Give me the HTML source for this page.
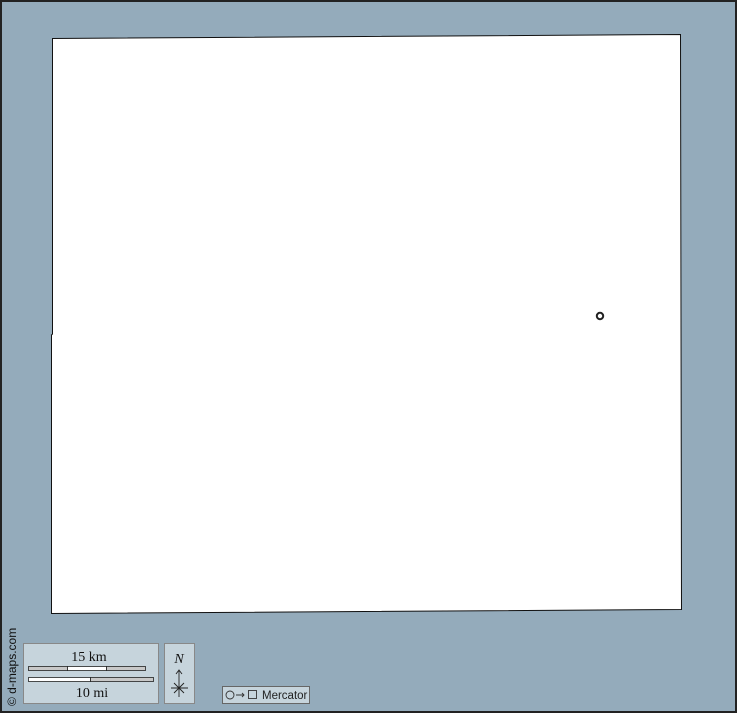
<!DOCTYPE html>
<html><head><style>
html,body{margin:0;padding:0;width:737px;height:713px;overflow:hidden;background:#94abbb}
</style></head><body>
<svg width="737" height="713" xmlns="http://www.w3.org/2000/svg" style="display:block">
<rect x="1" y="1" width="735" height="711" fill="#94abbb" stroke="#222" stroke-width="2"/>
<polygon points="52.5,38.5 680.5,34.5 681.5,609.5 51.5,613.5 51.5,335 52.5,334" fill="#fff" stroke="#111" stroke-width="1"/>
<circle cx="600" cy="316" r="3.2" fill="#fff" stroke="#222" stroke-width="2"/>
<text transform="translate(16,706) rotate(-90)" font-family="Liberation Sans, sans-serif" font-size="12" fill="#111">© d-maps.com</text>
<rect x="23.5" y="643.5" width="135" height="60" fill="#c6d4dc" stroke="#888"/>
<text x="89" y="661" text-anchor="middle" font-family="Liberation Serif, serif" font-size="14" fill="#111">15 km</text>
<rect x="28.5" y="666.5" width="39" height="4" fill="#c8c8c8" stroke="#222" stroke-width="0.8"/>
<rect x="67.5" y="666.5" width="39" height="4" fill="#fff" stroke="#222" stroke-width="0.8"/>
<rect x="106.5" y="666.5" width="39" height="4" fill="#c8c8c8" stroke="#222" stroke-width="0.8"/>
<rect x="28.5" y="677.5" width="62" height="4" fill="#fff" stroke="#222" stroke-width="0.8"/>
<rect x="90.5" y="677.5" width="63" height="4" fill="#c8c8c8" stroke="#222" stroke-width="0.8"/>
<text x="92" y="697" text-anchor="middle" font-family="Liberation Serif, serif" font-size="14" fill="#111">10 mi</text>
<rect x="164.5" y="643.5" width="30" height="60" fill="#c6d4dc" stroke="#888"/>
<text x="179" y="663" text-anchor="middle" font-family="Liberation Serif, serif" font-style="italic" font-size="14" fill="#111">N</text>
<path d="M179,671 V697 M176,674 L179,670 L182,674 M171,688 H188 M174,683 L184,693 M184,683 L174,693" stroke="#222" stroke-width="0.9" fill="none"/>
<rect x="222.5" y="686.5" width="87" height="17" fill="#c6d4dc" stroke="#666"/>
<circle cx="230" cy="695" r="4" fill="none" stroke="#333" stroke-width="0.9"/>
<path d="M236,695 H244 M242,693 L244,695 L242,697" stroke="#333" stroke-width="0.9" fill="none"/>
<rect x="248.5" y="690.5" width="8" height="8" fill="none" stroke="#333" stroke-width="0.9"/>
<text x="262" y="699" font-family="Liberation Sans, sans-serif" font-size="11.5" fill="#222">Mercator</text>
</svg>
</body></html>
